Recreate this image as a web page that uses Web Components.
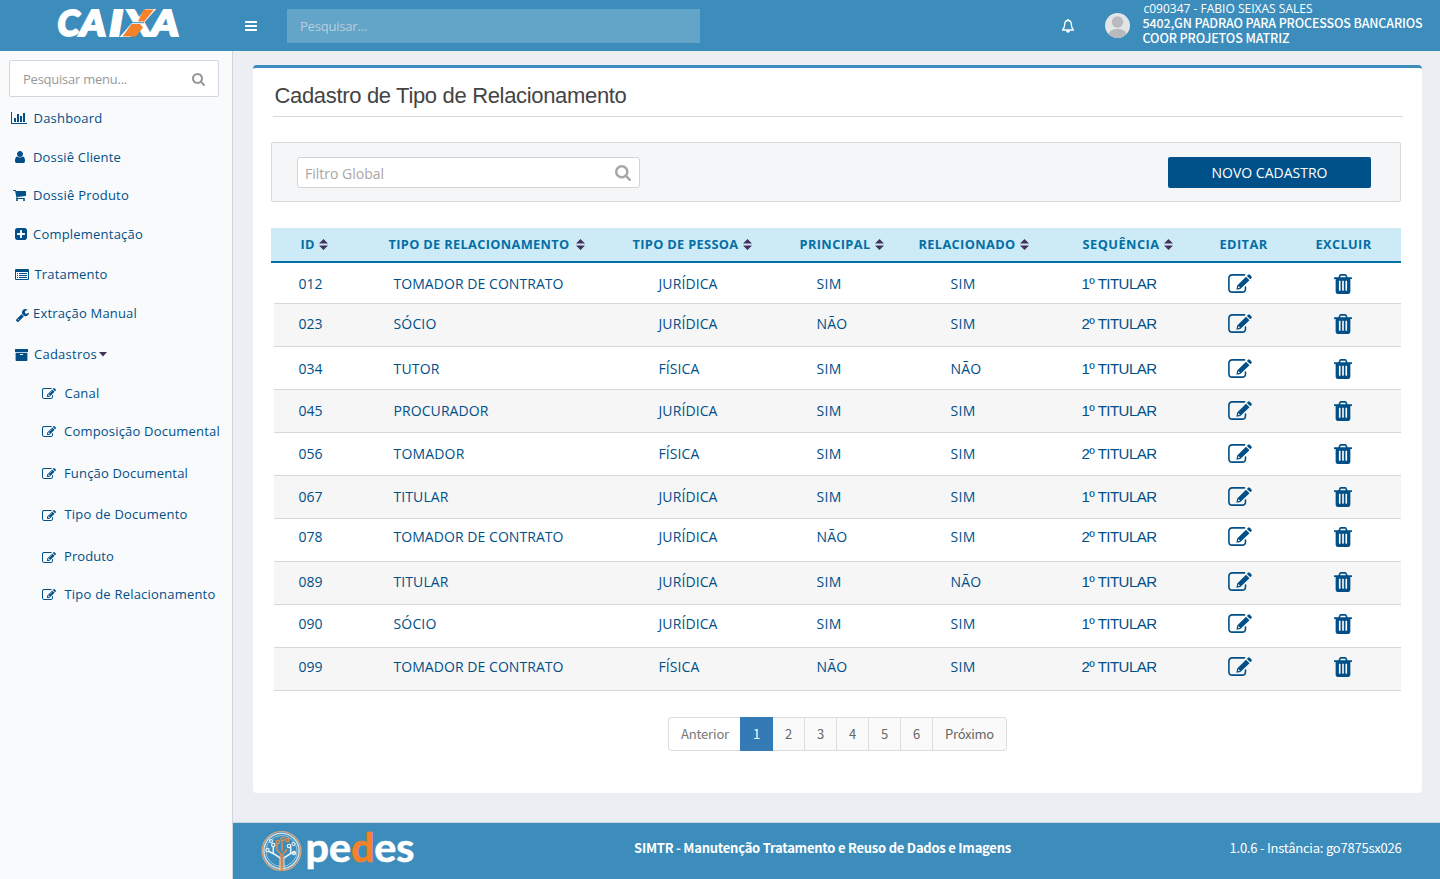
<!DOCTYPE html>
<html lang="pt-BR">
<head>
<meta charset="utf-8">
<title>SIMTR - Cadastro de Tipo de Relacionamento</title>
<style>
html,body{margin:0;padding:0;height:100%}
body{font-family:"Open Sans",sans-serif;background:#ebeef3;overflow:hidden}
</style>
</head>
<body>
<app-shell></app-shell>
<script>
const EDIT='<path d="M888 1184l116-116-152-152-116 116v56h96v96h56zm440-720q-16-16-33 1l-350 350q-17 17-1 33t33-1l350-350q17-17 1-33zm80 594v190q0 119-84.500 203.500t-203.500 84.500h-832q-119 0-203.500-84.500t-84.500-203.500v-832q0-119 84.500-203.500t203.500-84.500h832q63 0 117 25 15 7 18 23 3 17-9 29l-49 49q-14 14-32 8-23-6-45-6h-832q-66 0-113 47t-47 113v832q0 66 47 113t113 47h832q66 0 113-47t47-113v-126q0-13 9-22l64-64q15-15 35-7t20 29zm-96-738l288 288-672 672h-288v-288zm444 132l-92 92-288-288 92-92q28-28 68-28t68 28l152 152q28 28 28 68t-28 68z"/>';
const ICONS={
 bars:['128 256 1536 1280','<path d="M1664 1344v128q0 26-19 45t-45 19h-1408q-26 0-45-19t-19-45v-128q0-26 19-45t45-19h1408q26 0 45 19t19 45zm0-512v128q0 26-19 45t-45 19h-1408q-26 0-45-19t-19-45v-128q0-26 19-45t45-19h1408q26 0 45 19t19 45zm0-512v128q0 26-19 45t-45 19h-1408q-26 0-45-19t-19-45v-128q0-26 19-45t45-19h1408q26 0 45 19t19 45z"/>'],
 search:['64 128 1664 1664','<path d="M1216 832q0-185-131.500-316.500t-316.500-131.500-316.500 131.500-131.500 316.500 131.500 316.500 316.500 131.500 316.500-131.500 131.500-316.500zm512 832q0 52-38 90t-90 38q-54 0-90-38l-343-342q-179 124-399 124-143 0-273.500-55.500t-225-150-150-225-55.500-273.500 55.500-273.500 150-225 225-150 273.500-55.500 273.500 55.500 225 150 150 225 55.500 273.500q0 220-124 399l343 343q37 37 37 90z"/>'],
 edit:['0 136 1784 1400',EDIT],
 editLarge:['0 0 24 19','<path d="M16.500.9H4.300Q.9.900.9 4.300v10.400q0 3.400 3.400 3.400h9.800q3.400 0 3.400-3.400V13" fill="none" stroke="currentColor" stroke-width="1.600" stroke-linecap="round"/><path fill-rule="evenodd" d="M18 2.700l3.500 3.500-9.200 8.700-3.900.8.800-4.200zM10.500 12l-.6 2.300 2.100-.6zM18.900 1.900L20.200.7q.8-.7 1.600 0l1.700 1.700q.7.800 0 1.500l-1.200 1.300z"/>'],
 user:['256 128 1280 1536','<path d="M1536 1399q0 109-62.500 187t-150.500 78h-854q-88 0-150.500-78t-62.500-187q0-85 8.500-160.500t31.500-152 58.500-131 94-89 134.500-34.500q131 128 313 128t313-128q76 0 134.500 34.500t94 89 58.500 131 31.500 152 8.500 160.500zm-256-887q0 159-112.500 271.500t-271.500 112.500-271.500-112.500-112.500-271.500 112.500-271.500 271.500-112.500 271.500 112.500 112.500 271.500z"/>'],
 cart:['64 256 1664 1408','<path d="M704 1536q0 52-38 90t-90 38-90-38-38-90 38-90 90-38 90 38 38 90zm896 0q0 52-38 90t-90 38-90-38-38-90 38-90 90-38 90 38 38 90zm128-1088v512q0 24-16.500 42.500t-40.500 21.500l-1044 122q13 60 13 70 0 16-24 64h920q26 0 45 19t19 45-19 45-45 19h-1024q-26 0-45-19t-19-45q0-11 8-31.500t16-36 21.500-40 15.500-29.500l-177-823h-204q-26 0-45-19t-19-45 19-45 45-19h256q16 0 28.500 6.500t19.500 15.500 13 24.500 8 26 5.500 29.500 4.500 26h1201q26 0 45 19t19 45z"/>'],
 plus:['128 128 1536 1536','<path d="M1408 960v-128q0-26-19-45t-45-19h-320v-320q0-26-19-45t-45-19h-128q-26 0-45 19t-19 45v320h-320q-26 0-45 19t-19 45v128q0 26 19 45t45 19h320v320q0 26 19 45t45 19h128q26 0 45-19t19-45v-320h320q26 0 45-19t19-45zm256-544v960q0 119-84.500 203.500t-203.500 84.500h-960q-119 0-203.500-84.500t-84.500-203.500v-960q0-119 84.500-203.500t203.500-84.500h960q119 0 203.500 84.500t84.500 203.500z"/>'],
 wrench:['85 117 1641 1654','<path d="M448 1472q0-26-19-45t-45-19-45 19-19 45 19 45 45 19 45-19 19-45zm644-420l-682 682q-37 37-90 37-52 0-91-37l-106-108q-38-36-38-90 0-53 38-91l681-681q39 98 114.500 173.500t173.500 114.500zm634-435q0 39-23 106-47 134-164.500 217.500t-258.500 83.500q-185 0-316.500-131.500t-131.500-316.500 131.500-316.500 316.500-131.500q58 0 121.500 16.500t107.500 46.500q16 11 16 28t-16 28l-293 169v224l193 107q5-3 79-48.500t135.500-81 70.500-35.500q15 0 23.500 10t8.500 25z"/>'],
 trash:['192 128 1408 1536','<path d="M704 1376v-704q0-14-9-23t-23-9h-64q-14 0-23 9t-9 23v704q0 14 9 23t23 9h64q14 0 23-9t9-23zm256 0v-704q0-14-9-23t-23-9h-64q-14 0-23 9t-9 23v704q0 14 9 23t23 9h64q14 0 23-9t9-23zm256 0v-704q0-14-9-23t-23-9h-64q-14 0-23 9t-9 23v704q0 14 9 23t23 9h64q14 0 23-9t9-23zm-544-992h448l-48-117q-7-9-17-11h-317q-10 2-17 11zm928 32v64q0 14-9 23t-23 9h-96v948q0 83-47 143.500t-113 60.500h-832q-66 0-113-58.500t-47-141.500v-952h-96q-14 0-23-9t-9-23v-64q0-14 9-23t23-9h309l70-167q15-37 54-63t79-26h320q40 0 79 26t54 63l70 167h309q14 0 23 9t9 23z"/>'],
 chart:['0 0 16 12','<path d="M0 0h1v11h15v1H0zM3 6h2v4H3zM6 2h2v8H6zM9 4h2v6H9zM12 1h2v9h-2z"/>'],
 list:['0 0 14 11','<path fill-rule="evenodd" d="M1.200 0h11.600q1.200 0 1.200 1.200v8.600q0 1.200-1.200 1.200H1.200Q0 11 0 9.800V1.200Q0 0 1.200 0zM1 3v6.600q0 .4.4.4h11.200q.4 0 .4-.4V3zM2 4h1v1H2zM4 4h8v1H4zM2 6h1v1H2zM4 6h8v1H4zM2 8h1v1H2zM4 8h8v1H4z"/>'],
 archive:['0 0 13 12','<path fill-rule="evenodd" d="M.4 0h12.200q.4 0 .4.4V3H0V.4Q0 0 .4 0zM.6 3.700h11.800v7.500q0 .8-.8.8H1.400q-.8 0-.8-.8zM5 5v1h3V5z"/>'],
 bell:['0 0 14 14','<path d="M7 1.500C4.900 1.500 3.800 3 3.700 5.200 3.600 8 3 9.700 1.500 11h11C11 9.700 10.400 8 10.300 5.200 10.200 3 9.100 1.500 7 1.500z" fill="none" stroke="currentColor" stroke-width="1.300" stroke-linejoin="round"/><path d="M6.300 0h1.400v2H6.300zM5 11.500h4Q8.800 13.700 7 13.700T5 11.500z"/>'],
 caret:['0 0 8 4.500','<path d="M0 0h8L4 4.500z"/>'],
 sort:['0 0 9 11','<path d="M0 4.500L4.500 0 9 4.500zM0 6.500h9L4.500 11z"/>']
};
class UiIcon extends HTMLElement{
 connectedCallback(){
  const [vb,body]=ICONS[this.getAttribute('name')];
  this.attachShadow({mode:'open'}).innerHTML=`<style>:host{display:block;flex:none;width:${this.getAttribute('w')}px;height:${this.getAttribute('h')}px}svg{display:block;width:100%;height:100%}</style><svg viewBox="${vb}" preserveAspectRatio="none" fill="currentColor">${body}</svg>`;
 }
}
/* A one-line label whose tracking is set so that it takes up the width in its "w" attribute. */
class FitText extends HTMLElement{
 connectedCallback(){
  this.attachShadow({mode:'open'}).innerHTML='<style>:host{display:block;flex:none;white-space:nowrap}span{display:inline-block}</style><span><slot></slot></span>';
  const w=+this.getAttribute('w'),n=this.textContent.length;
  const s=this.shadowRoot.querySelector('span');
  if(w){
   const nat=s.getBoundingClientRect().width;
   s.style.letterSpacing=((w-nat)/n).toFixed(3)+'px';
   this.style.width=w+'px';
  }
 }
}
class AppHeader extends HTMLElement{
 connectedCallback(){
  this.attachShadow({mode:'open'}).innerHTML=`<style>
  :host{display:flex;height:51px;background:#3c8dbc;color:#fff;align-items:flex-start;box-sizing:border-box}
  .logo{width:126px;height:51px;margin:0 0 0 56px;flex:none;overflow:visible}
  .burger{margin:21px 0 0 63px}
  .search{margin:9px 0 0 30px;width:413px;height:34px;background:#63a4c9;box-sizing:border-box;padding-left:13px;font:13px/35px "Open Sans",sans-serif;color:#b9cfdc}
  .bell{margin:19px 0 0 361px}
  .avatar{margin:13px 0 0 30px;width:25px;height:25px;flex:none}
  .who{margin:1px 0 0 12.500px;font:500 12.500px/15px "Noto Sans CJK SC",sans-serif}
  .who fit-text{margin-top:-1px;height:16px}
  .who :first-child{margin:0 0 0 1px;height:15px;font-family:"Open Sans";font-weight:400;font-size:12px}
  </style>
  <svg class="logo" viewBox="56 0 126 51" font-family="Lato" font-weight="900" font-style="italic" font-size="36" fill="#fff" stroke="#fff" stroke-width="2">
   <text x="57.500" y="36" textLength="22" lengthAdjust="spacingAndGlyphs">C</text><text x="80" y="36" textLength="26" lengthAdjust="spacingAndGlyphs">A</text><text x="109" y="36" textLength="14" lengthAdjust="spacingAndGlyphs">I</text><text x="124" y="36" textLength="28" lengthAdjust="spacingAndGlyphs">X</text><text x="151" y="36" textLength="28" lengthAdjust="spacingAndGlyphs">A</text>
   <path stroke="none" fill="#f5822a" d="M143.500 9.500h10.500L144 21.500h-6zM131.500 24h8.500l3 3.500-7 9h-13.500z"/><path stroke="#3c8dbc" stroke-width="1" d="M131 22.700h13"/>
  </svg>
  <ui-icon class="burger" name="bars" w="12" h="10"></ui-icon>
  <div class="search"><fit-text w="67">Pesquisar...</fit-text></div>
  <ui-icon class="bell" name="bell" w="14" h="14"></ui-icon>
  <svg class="avatar" viewBox="0 0 25 25"><defs><clipPath id="c"><circle cx="12.500" cy="12.500" r="12.500"/></clipPath></defs><g clip-path="url(#c)"><path fill="#e3e4e6" d="M0 0h25v25H0z"/><circle cx="12.500" cy="9" r="5.700" fill="#b8babd"/><ellipse cx="12.500" cy="22" rx="9" ry="6.300" fill="#b8babd"/></g></svg>
  <div class="who"><fit-text w="169">c090347 - FABIO SEIXAS SALES</fit-text><fit-text w="280">5402,GN PADRAO PARA PROCESSOS BANCARIOS</fit-text><fit-text w="147">COOR PROJETOS MATRIZ</fit-text></div>`;
 }
}
/* label, icon, icon width, icon height, icon left, icon top, label left, label width, gap above */
const MENU=[
 ['Dashboard','chart',16,12,11,4,33.500,69,11],
 ['Dossiê Cliente','user',10,12,15,4,33,88,19],
 ['Dossiê Produto','cart',13,11,13,5,33,96,18],
 ['Complementação','plus',12,12,15,4,33,110,19],
 ['Tratamento','list',14,11,14.500,5,34.500,73,20],
 ['Extração Manual','wrench',13,13,16,6,33,104,19],
 ['Cadastros','archive',13,12,15,5,34,63,21],
 ['Canal','edit',14,11,42,5,64.500,35,19],
 ['Composição Documental','edit',14,11,42,5,64,156,18],
 ['Função Documental','edit',14,11,42,5,64,124,22],
 ['Tipo de Documento','edit',14,11,42,6,64.500,123,21],
 ['Produto','edit',14,11,42,6,64,50,22],
 ['Tipo de Relacionamento','edit',14,11,42,5,64.500,151,18]
];
class SideMenu extends HTMLElement{
 connectedCallback(){
  this.attachShadow({mode:'open'}).innerHTML=`<style>
  :host{display:block;width:233px;box-sizing:border-box;border-right:1px solid #d0d5dc;background:#f9fafc;color:#004f88;font-size:13px;line-height:20px;flex:none}
  .box{display:flex;align-items:center;justify-content:space-between;margin:9px 0 0 9px;width:210px;height:37px;box-sizing:border-box;border:1px solid #d2d6de;border-radius:2px;background:#fff;padding:0 13px;color:#999}
  .box ui-icon{margin-top:2px}
  ul{list-style:none;margin:0;padding:0}
  li{display:flex;height:20px;align-items:flex-start}
  .caret{color:#43315a;margin:8px 0 0 2px}
  </style>
  <div class="box"><fit-text w="104">Pesquisar menu...</fit-text><ui-icon name="search" w="13" h="13"></ui-icon></div>
  <ul>${MENU.map(([t,i,w,h,x,y,tx,tw,gap])=>`<li style="margin-top:${gap}px"><ui-icon name="${i}" w="${w}" h="${h}" style="margin:${y}px ${tx-x-w}px 0 ${x}px"></ui-icon><fit-text w="${tw}">${t}</fit-text>${t==='Cadastros'?'<ui-icon class="caret" name="caret" w="8" h="4.5"></ui-icon>':''}</li>`).join('')}</ul>`;
 }
}
const COLS=[['ID',14,4.500],['TIPO DE RELACIONAMENTO',181,6.500],['TIPO DE PESSOA',106,4.500],['PRINCIPAL',71,4.500],['RELACIONADO',97,4.500],['SEQUÊNCIA',77,4.500],['EDITAR',48],['EXCLUIR',56]];
const WORD={'TOMADOR DE CONTRATO':170,'SÓCIO':43,'TUTOR':46,'PROCURADOR':95,'TOMADOR':71,'TITULAR':55,'JURÍDICA':59,'FÍSICA':41,'SIM':25,'NÃO':31};
const T='TOMADOR DE CONTRATO',J='JURÍDICA',F='FÍSICA',S='SIM',N='NÃO';
/* id, type, person, main, related, order, padding above the text */
const ROWS=[['012',T,J,S,S,1,11],['023','SÓCIO',J,N,S,2,10],['034','TUTOR',F,S,N,1,12],['045','PROCURADOR',J,S,S,1,11],['056','TOMADOR',F,S,S,2,11],['067','TITULAR',J,S,S,1,11],['078',T,J,N,S,2,8],['089','TITULAR',J,S,N,1,10],['090','SÓCIO',J,S,S,1,9],['099',T,F,N,S,2,9]];
class DataTable extends HTMLElement{
 connectedCallback(){
  const word=s=>`<fit-text w="${WORD[s]}">${s}</fit-text>`;
  this.attachShadow({mode:'open'}).innerHTML=`<style>
  :host{display:block;width:1130px}
  .head{display:grid;grid-template-columns:88px 244px 167px 119px 164px 137px 96px 1fr;padding-left:29.500px;height:35px;box-sizing:border-box;border-bottom:2px solid #036fa5;background:#cdebf7;color:#036fa5;font-size:12.800px;font-weight:700;line-height:33px}
  .head div{display:flex;align-items:center}
  .head ui-icon{color:#43315a}
  .row{display:grid;grid-template-columns:95px 265px 158px 134px 131px 147px 106px 1fr;padding-left:24.500px;margin-left:3px;height:43px;box-sizing:border-box;border-bottom:1px solid #d5d7d9;color:#004f88;font-size:14px;line-height:20px;align-items:start}
  .row:nth-of-type(2){height:41px}
  .row:nth-of-type(odd){background:#f6f6f6}
  .row ui-icon{margin-left:-.5px}
  .seq{font:15px/20px "Liberation Sans",sans-serif}
  </style><div class="head">${COLS.map(([t,w,g])=>`<div><fit-text w="${w}">${t}</fit-text>${g?`<ui-icon name="sort" w="9" h="11" style="margin-left:${g}px"></ui-icon>`:''}</div>`).join('')}</div>
  ${ROWS.map(r=>`<div class="row" style="padding-top:${r[6]}px"><fit-text w="24">${r[0]}</fit-text>${r.slice(1,5).map(word).join('')}<fit-text class="seq" w="75">${r[5]}º TITULAR</fit-text><ui-icon name="editLarge" w="24" h="19"></ui-icon><ui-icon name="trash" w="18" h="20"></ui-icon></div>`).join('')}`;
 }
}
class PageNav extends HTMLElement{
 connectedCallback(){
  this.attachShadow({mode:'open'}).innerHTML=`<style>
  :host{display:flex;width:339px;height:34px;box-sizing:border-box;font:13px/32px "Noto Sans CJK SC",sans-serif;color:#666}
  div{display:flex;justify-content:center;width:32px;box-sizing:border-box;border:1px solid #ddd;border-left:0;background:#fafafa}
  .prev{width:72px;padding-left:1px;border-left:1px solid #ddd;border-right:0;border-radius:4px 0 0 4px;background:#fff;color:#777}
  .on{width:33px;padding-left:1px;background:#337ab7;border-color:#337ab7;color:#fff}
  .next{width:74px;border-radius:0 4px 4px 0}
  </style><div class="prev"><fit-text w="48">Anterior</fit-text></div><div class="on">1</div>${[2,3,4,5,6].map(n=>`<div>${n}</div>`).join('')}<div class="next"><fit-text w="49">Próximo</fit-text></div>`;
 }
}
class ContentCard extends HTMLElement{
 connectedCallback(){
  this.attachShadow({mode:'open'}).innerHTML=`<style>
  :host{display:block;margin:14px 0 0 20px;width:1169px;height:728px;box-sizing:border-box;border-top:3px solid #3c8dbc;border-radius:4px;background:#fff}
  h1{margin:0 0 0 20px;padding-left:1.500px;width:1130px;height:49px;box-sizing:border-box;border-bottom:1px solid #d8d8d8;font:22px/55px "Liberation Sans",sans-serif;color:#444}
  .filter{display:flex;justify-content:space-between;align-items:flex-start;margin:25px 0 26px 18px;width:1130px;height:60px;box-sizing:border-box;border:1px solid #d5d7d9;border-radius:2px;background:#f5f6f8;padding:14px 29px 0 25px}
  .input{display:flex;justify-content:space-between;width:343px;height:31px;box-sizing:border-box;border:1px solid #d2d4d6;border-radius:3px;background:#fff;padding:0 8px 0 7px;font-size:14px;line-height:32px;color:#aaa6a6}
  .input ui-icon{margin-top:7px}
  .btn{display:flex;justify-content:center;width:203px;height:31px;border-radius:2px;background:#005189;color:#fff;font-size:14px;line-height:31px}
  data-table{margin-left:18px}
  page-nav{margin:26px 0 0 415px}
  </style><h1><fit-text w="352">Cadastro de Tipo de Relacionamento</fit-text></h1>
  <div class="filter"><div class="input"><fit-text w="79">Filtro Global</fit-text><ui-icon name="search" w="16" h="16"></ui-icon></div><div class="btn"><fit-text w="116">NOVO CADASTRO</fit-text></div></div>
  <data-table></data-table><page-nav></page-nav>`;
 }
}
class AppFooter extends HTMLElement{
 connectedCallback(){
  this.attachShadow({mode:'open'}).innerHTML=`<style>
  :host{display:flex;height:57px;box-sizing:border-box;border-top:1px solid #d2d6de;background:#3c8dbc;color:#fff;font:13px/20px "Noto Sans CJK SC",sans-serif;align-items:flex-start}
  svg{width:156px;height:56px;margin:0 0 0 27px;flex:none;overflow:visible}
  .name{font-weight:700;margin:15px 0 0 218px}
  .ver{margin:15px 0 0 218.500px}
  </style><svg viewBox="260 823 156 56" fill="none">
  <circle cx="281.500" cy="851" r="19.400" stroke="#d9a57f" stroke-width="1.300"/><circle cx="281.500" cy="851" r="17.600" stroke="#cfe4ef" stroke-width="1.400"/><circle cx="281.500" cy="851" r="15.600" stroke="#a9cde0" stroke-width=".9"/>
  <path d="M280.300 870v-12l-7-4.500v-7M273 853.500l-5-2.500M283.700 870v-12l7-4.500v-7M290.500 853.500l5-1" stroke="#e4f0f6" stroke-width="1.500"/>
  <g stroke="#e4f0f6" stroke-width="1.200"><circle cx="273.300" cy="845" r="1.700"/><circle cx="267.500" cy="850" r="1.600"/><circle cx="271" cy="841" r="1.500"/><circle cx="289" cy="846" r="1.700"/><circle cx="293.500" cy="844" r="1.500"/><circle cx="294" cy="853" r="1.600"/></g>
  <path d="M281 871v-17l-4-4v-6M283 871v-17l4-4.500M282 851v-10" stroke="#f08a3c" stroke-width="1.400"/><g stroke="#f08a3c" stroke-width="1.200"><circle cx="278" cy="842" r="1.700"/><circle cx="282.500" cy="839" r="1.700"/><circle cx="287.500" cy="840" r="1.600"/></g>
  <text x="305.500" y="862" font-family="Lato" font-weight="700" font-size="41" textLength="109" lengthAdjust="spacingAndGlyphs" fill="#fff" stroke="#fff" stroke-width=".7">pe<tspan fill="#f5822a" stroke="#f5822a">d</tspan>es</text></svg>
  <fit-text class="name" w="377">SIMTR - Manutenção Tratamento e Reuso de Dados e Imagens</fit-text><fit-text class="ver" w="172">1.0.6 - Instância: go7875sx026</fit-text>`;
 }
}
class AppShell extends HTMLElement{
 connectedCallback(){
  this.attachShadow({mode:'open'}).innerHTML=`<style>
  :host{display:flex;flex-direction:column;height:879px;width:1440px}
  .body{display:flex;flex:1}
  main{flex:1;display:flex;flex-direction:column}
  app-footer{margin-top:auto}
  </style><app-header></app-header><div class="body"><side-menu></side-menu><main><content-card></content-card><app-footer></app-footer></main></div>`;
 }
}
customElements.define('ui-icon',UiIcon);
customElements.define('fit-text',FitText);
customElements.define('app-header',AppHeader);
customElements.define('side-menu',SideMenu);
customElements.define('data-table',DataTable);
customElements.define('page-nav',PageNav);
customElements.define('content-card',ContentCard);
customElements.define('app-footer',AppFooter);
customElements.define('app-shell',AppShell);
</script>
</body>
</html>
